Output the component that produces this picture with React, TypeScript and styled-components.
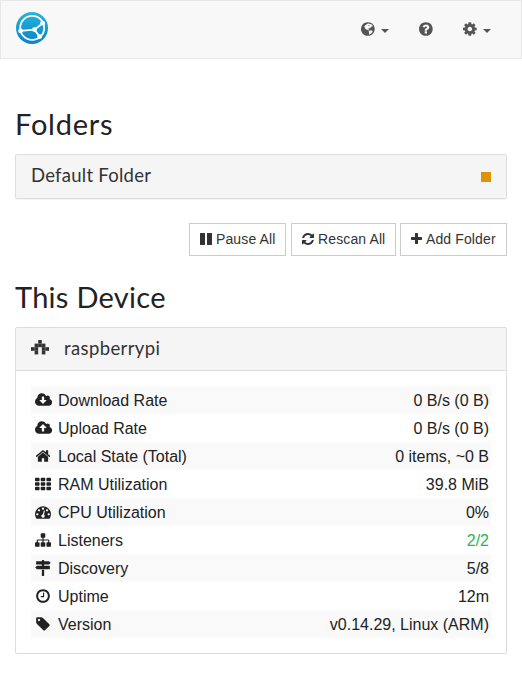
import React from "react";
import styled, { createGlobalStyle } from "styled-components";

const GlobalStyle = createGlobalStyle`
  * { box-sizing: border-box; }
  body {
    margin: 0;
    background: #fff;
    color: #222;
    font: 16px/20px "Liberation Sans", Arial, sans-serif;
  }
`;

const Navbar = styled.nav`
  display: flex;
  align-items: center;
  justify-content: space-between;
  height: 59px;
  padding: 0 30px 0 15px;
  background: #f8f8f8;
  border: 1px solid #e7e7e7;
  color: #555;
`;

const Brand = styled.a`
  display: flex;
  margin-top: -3px;
`;

const NavItems = styled.div`
  display: flex;
  align-items: center;
  gap: 30px;
  margin-top: -1px;
`;

const NavItem = styled.a`
  display: flex;
  align-items: center;
`;

const Caret = styled.span`
  margin: 4px 0 0 6.3px;
  border-top: 4px solid currentColor;
  border-left: 4px solid transparent;
  border-right: 4px solid transparent;
`;

const Main = styled.main`
  padding: 0 15px;
`;

const SectionTitle = styled.h3<{ $top: number; $spacing: number }>`
  margin: ${(p) => p.$top}px 0 14px;
  font: 400 29px/33px Lato, sans-serif;
  letter-spacing: ${(p) => p.$spacing}px;
`;

const Panel = styled.section`
  border: 1px solid #ddd;
  border-radius: 2px;
  box-shadow: 0 1px 1px rgba(0, 0, 0, 0.05);
`;

const PanelHeading = styled.header<{ $height: number; $divided?: boolean }>`
  display: flex;
  align-items: center;
  height: ${(p) => p.$height}px;
  padding: 0 15px;
  background: #f5f5f5;
  color: #333;
  border-bottom: ${(p) => (p.$divided ? "1px solid #ddd" : "0")};
`;

const PanelTitle = styled.h4<{ $spacing: number }>`
  margin: 0;
  padding-bottom: 3px;
  flex: 1;
  font: 400 18.5px/20px Lato, sans-serif;
  letter-spacing: ${(p) => p.$spacing}px;
`;

const StatusSquare = styled.span`
  width: 10px;
  height: 10px;
  margin-top: 1px;
  background: #de9208;
`;

const IdenticonSvg = styled.svg`
  margin: -1px 15px 0 0;
`;

const ButtonRow = styled.div`
  display: flex;
  justify-content: flex-end;
  gap: 4px;
  margin-top: 24px;
`;

const Button = styled.button<{ $width: number }>`
  display: flex;
  align-items: center;
  gap: 4px;
  width: ${(p) => p.$width}px;
  height: 33px;
  padding: 0 0 1px 10px;
  white-space: nowrap;
  background: #fff;
  color: #333;
  border: 1px solid #ccc;
  font: 14px/20px "Liberation Sans", Arial, sans-serif;
  letter-spacing: 0.12px;

  &:first-child {
    margin-right: 1px;
  }
`;

const Table = styled.div`
  padding: 15px;
`;

const Row = styled.div`
  display: flex;
  align-items: center;
  height: 28px;
  padding: 0 2px;
  &:nth-child(odd) {
    background: #f9f9f9;
  }
`;

const IconSlot = styled.span`
  display: flex;
  justify-content: center;
  width: 20.57px;
  margin-right: 4.43px;
`;

const Label = styled.span`
  padding-top: 2px;
`;

const Value = styled.span<{ $ok?: boolean }>`
  margin-left: auto;
  padding-top: 2px;
  color: ${(p) => (p.$ok ? "#29b74e" : "inherit")};
`;

const DISC =
  "M1664 896q0 209-103 385.5t-279.5 279.5-385.5 103-385.5-103-279.5-279.5-103-385.5 103-385.5 279.5-279.5 385.5-103 385.5 103 279.5 279.5 103 385.5z";
const CLOUD =
  "M1920 1152q0 159-112.5 271.5t-271.5 112.5h-1088q-185 0-316.5-131.5t-131.5-316.5q0-130 70-240t188-165q-2-30-2-43 0-212 150-362t362-150q156 0 285.5 87t188.5 231q71-62 166-62 106 0 181 75t75 181q0 76-41 138 130 31 213.5 135.5t83.5 238.5z";
const cell = (x: number, y: number) =>
  `M${x + 96} ${y}h320q40 0 68 28t28 68v192q0 40-28 68t-68 28h-320q-40 0-68-28t-28-68v-192q0-40 28-68t68-28z`;

const ICONS = {
  globe: {
    x: 128,
    w: 1536,
    d:
      DISC +
      "M960 290L1130 330 1230 340 1380 440 1480 600 1400 590 1290 640 1180 760 1090 780 1040 860 960 840 930 920 1010 950 1030 1020 1110 1050 1060 1100 900 1020 740 950 610 870 540 740 500 620 580 490 700 420 800 330z" +
      "M1110 1080L1280 1050 1430 1130 1400 1260 1260 1400 1080 1510 1010 1490 1040 1330 990 1190z" +
      "M960 470L1090 500 1040 580 940 560z",
  },
  question: {
    x: 128,
    w: 1536,
    d:
      DISC +
      "M1024 1376v-192q0-14-9-23t-23-9h-192q-14 0-23 9t-9 23v192q0 14 9 23t23 9h192q14 0 23-9t9-23zM1280 704q0-88-55.5-163t-138.5-116-170-41q-243 0-371 213-15 24 8 42l132 100q7 6 19 6 16 0 25-12 53-68 86-92 34-24 86-24 48 0 85.5 26t37.5 59q0 38-20 61t-68 45q-63 28-115.5 86.5t-52.5 125.5v36q0 14 9 23t23 9h192q14 0 23-9t9-23q0-19 21.5-49.5t54.5-49.5q32-18 49-28.5t46-35 44.5-48 28-60.5 12.5-81z",
  },
  cog: {
    x: 128,
    w: 1536,
    d: "M1152 896q0-106-75-181t-181-75-181 75-75 181 75 181 181 75 181-75 75-181zm512-109v222q0 12-8 23t-20 13l-185 28q-19 54-39 91 35 50 107 138 10 12 10 25t-9 23q-27 37-99 108t-94 71q-12 0-26-9l-138-108q-44 23-91 38-16 136-29 186-7 28-36 28h-222q-14 0-24.5-8.5t-11.5-21.5l-28-184q-49-16-90-37l-141 107q-10 9-25 9-14 0-25-11-126-114-165-168-7-10-7-23 0-12 8-23 15-21 51-66.5t54-70.5q-27-50-41-99l-183-27q-13-2-21-12.5t-8-23.5v-222q0-12 8-23t19-13l186-28q14-46 39-92-40-57-107-138-10-12-10-24 0-10 9-23 26-36 98.5-107.5t94.5-71.5q13 0 26 10l138 107q44-23 91-38 16-136 29-186 7-28 36-28h222q14 0 24.5 8.5t11.5 21.5l28 184q49 16 90 37l142-107q9-9 24-9 13 0 25 10 129 119 165 170 7 8 7 22 0 12-8 23-15 21-51 66.5t-54 70.5q26 50 41 98l183 28q13 2 21 12.5t8 23.5z",
  },
  pause: {
    x: 0,
    w: 1536,
    d: "M1536 192v1408q0 26-19 45t-45 19h-512q-26 0-45-19t-19-45v-1408q0-26 19-45t45-19h512q26 0 45 19t19 45zm-896 0v1408q0 26-19 45t-45 19h-512q-26 0-45-19t-19-45v-1408q0-26 19-45t45-19h512q26 0 45 19t19 45z",
  },
  refresh: {
    x: 0,
    w: 1536,
    d: "M1511 1056q0 5-1 7-64 268-268 434.5t-478 166.5q-146 0-282.5-55t-243.5-157l-129 129q-19 19-45 19t-45-19-19-45v-448q0-26 19-45t45-19h448q26 0 45 19t19 45-19 45l-137 137q71 66 161 102t187 36q134 0 250-65t186-179q11-17 53-117 8-23 30-23h192q13 0 22.5 9.5t9.5 22.5zm25-800v448q0 26-19 45t-45 19h-448q-26 0-45-19t-19-45 19-45l138-138q-148-137-349-137-134 0-250 65t-186 179q-11 17-53 117-8 23-30 23h-199q-13 0-22.5-9.5t-9.5-22.5v-7q65-268 270-434.5t480-166.5q146 0 284 55.5t245 156.5l130-129q19-19 45-19t45 19 19 45z",
  },
  plus: {
    x: 0,
    w: 1408,
    d: "M1408 736v192q0 40-28 68t-68 28h-416v416q0 40-28 68t-68 28h-192q-40 0-68-28t-28-68v-416h-416q-40 0-68-28t-28-68v-192q0-40 28-68t68-28h416v-416q0-40 28-68t68-28h192q40 0 68 28t28 68v416h416q40 0 68 28t28 68z",
  },
  download: {
    x: 0,
    w: 1920,
    d: CLOUD + "M1280 928q0-14-9-23t-23-9h-224v-352q0-13-9.5-22.5t-22.5-9.5h-192q-13 0-22.5 9.5t-9.5 22.5v352h-224q-13 0-22.5 9.5t-9.5 22.5q0 14 9 23l352 352q9 9 23 9t23-9l351-351q10-12 10-24z",
  },
  upload: {
    x: 0,
    w: 1920,
    d: CLOUD + "M1280 864q0-14-9-23l-352-352q-9-9-23-9t-23 9l-351 351q-10 12-10 24 0 14 9 23t23 9h224v352q0 13 9.5 22.5t22.5 9.5h192q13 0 22.5-9.5t9.5-22.5v-352h224q13 0 22.5-9.5t9.5-22.5z",
  },
  home: {
    x: 0,
    w: 1792,
    d: "M1472 992v480q0 26-19 45t-45 19h-384v-384h-256v384h-384q-26 0-45-19t-19-45v-480q0-1 .5-3t.5-3l575-474 575 474q1 2 1 6zm223-69l-62 74q-8 9-21 11h-3q-13 0-21-7l-692-577-692 577q-12 8-24 7-13-2-21-11l-62-74q-8-10-7-23.5t11-21.5l719-599q32-26 76-26t76 26l244 204v-195q0-14 9-23t23-9h192q14 0 23 9t9 23v408l219 182q10 8 11 21.5t-7 23.5z",
  },
  grid: {
    x: 0,
    w: 1792,
    d: [0, 640, 1280].map((x) => [192, 704, 1216].map((y) => cell(x, y)).join("")).join(""),
  },
  gauge: {
    x: 0,
    w: 1792,
    d: "M384 1152q0-53-37.5-90.5t-90.5-37.5-90.5 37.5-37.5 90.5 37.5 90.5 90.5 37.5 90.5-37.5 37.5-90.5zm192-448q0-53-37.5-90.5t-90.5-37.5-90.5 37.5-37.5 90.5 37.5 90.5 90.5 37.5 90.5-37.5 37.5-90.5zm428 481l101-382q6-26-7.5-48.5t-38.5-29.5-48 6.5-30 39.5l-101 382q-60 5-107 43.5t-63 98.5q-20 77 20 146t117 89 146-20 89-117q16-60-6-117t-72-91zm660-33q0-53-37.5-90.5t-90.5-37.5-90.5 37.5-37.5 90.5 37.5 90.5 90.5 37.5 90.5-37.5 37.5-90.5zm-640-640q0-53-37.5-90.5t-90.5-37.5-90.5 37.5-37.5 90.5 37.5 90.5 90.5 37.5 90.5-37.5 37.5-90.5zm448 192q0-53-37.5-90.5t-90.5-37.5-90.5 37.5-37.5 90.5 37.5 90.5 90.5 37.5 90.5-37.5 37.5-90.5zm320 448q0 261-141 483-19 29-54 29h-1402q-35 0-54-29-141-221-141-483 0-182 71-348t191-286 286-191 348-71 348 71 286 191 191 286 71 348z",
  },
  sitemap: {
    x: 0,
    w: 1792,
    d: "M1792 1248v320q0 40-28 68t-68 28h-320q-40 0-68-28t-28-68v-320q0-40 28-68t68-28h96v-192h-512v192h96q40 0 68 28t28 68v320q0 40-28 68t-68 28h-320q-40 0-68-28t-28-68v-320q0-40 28-68t68-28h96v-192h-512v192h96q40 0 68 28t28 68v320q0 40-28 68t-68 28h-320q-40 0-68-28t-28-68v-320q0-40 28-68t68-28h96v-192q0-52 38-90t90-38h512v-192h-96q-40 0-68-28t-28-68v-320q0-40 28-68t68-28h320q40 0 68 28t28 68v320q0 40-28 68t-68 28h-96v192h512q52 0 90 38t38 90v192h96q40 0 68 28t28 68z",
  },
  signs: {
    x: 0,
    w: 1792,
    d: "M1745 297q10 10 10 23t-10 23l-141 141q-28 28-68 28h-1344q-26 0-45-19t-19-45v-256q0-26 19-45t45-19h576v-64q0-26 19-45t45-19h128q26 0 45 19t19 45v64h512q40 0 68 28zM768 1088h256v640q0 26-19 45t-45 19h-128q-26 0-45-19t-19-45zM1600 640q26 0 45 19t19 45v256q0 26-19 45t-45 19h-1344q-40 0-68-28l-141-141q-10-10-10-23t10-23l141-141q28-28 68-28h512v-128h256v128z",
  },
  clock: {
    x: 0,
    w: 1792,
    d: DISC + "M1024 544v448q0 14-9 23t-23 9h-320q-14 0-23-9t-9-23v-64q0-14 9-23t23-9h224v-352q0-14 9-23t23-9h64q14 0 23 9t9 23zM1440 896q0-148-73-273t-198-198-273-73-273 73-198 198-73 273 73 273 198 198 273 73 273-73 198-198 73-273z",
  },
  tag: {
    x: 0,
    w: 1792,
    d: "M576 448q0-53-37.5-90.5t-90.5-37.5-90.5 37.5-37.5 90.5 37.5 90.5 90.5 37.5 90.5-37.5 37.5-90.5zm1067 576q0 53-37 90l-491 492q-39 37-91 37-53 0-90-37l-715-716q-38-37-64.5-101t-26.5-117v-416q0-52 38-90t90-38h416q53 0 117 26.5t102 64.5l715 714q37 39 37 91z",
  },
};

type IconName = keyof typeof ICONS;

const Icon = ({ name, size = 16 }: { name: IconName; size?: number }) => {
  const { x, w, d } = ICONS[name];
  return (
    <svg width={(size * w) / 1792} height={size} viewBox={`${x} 0 ${w} 1792`} fill="currentColor" fillRule="evenodd" aria-hidden>
      <path d={d} />
    </svg>
  );
};

const Logo = () => (
  <svg width="32" height="32" viewBox="0 0 32 32" aria-label="Syncthing">
    <defs>
      <linearGradient id="brand" x1="0" y1="0" x2="0" y2="1">
        <stop offset="0" stopColor="#26b6db" />
        <stop offset="1" stopColor="#0882c8" />
      </linearGradient>
    </defs>
    <circle cx="16" cy="16" r="16" fill="url(#brand)" />
    <g fill="none" stroke="#fff" strokeWidth="1.8">
      <circle cx="16.2" cy="15.9" r="12" />
      <path d="M4.4 18.8L18.4 17.6 26.7 11.2M18.4 17.6L23.7 24.6" />
    </g>
    <g fill="#fff">
      <circle cx="4.6" cy="18.9" r="2.4" />
      <circle cx="18.4" cy="17.6" r="2.4" />
      <circle cx="26.6" cy="11.2" r="2.4" />
      <circle cx="23.7" cy="24.6" r="2.4" />
    </g>
  </svg>
);

const IDENTICON = ["00100", "01110", "11011", "01010"];

const Identicon = () => (
  <IdenticonSvg width="18" height="18" viewBox="0 0 5 5" fill="#333" aria-hidden>
    {IDENTICON.flatMap((line, y) =>
      [...line].map((c, x) => (c === "1" ? <rect key={`${x}-${y}`} x={x} y={y} width="1" height="1" /> : null)),
    )}
  </IdenticonSvg>
);

const STATS: { icon: IconName; label: string; value: string; ok?: boolean }[] = [
  { icon: "download", label: "Download Rate", value: "0 B/s (0 B)" },
  { icon: "upload", label: "Upload Rate", value: "0 B/s (0 B)" },
  { icon: "home", label: "Local State (Total)", value: "0 items, ~0 B" },
  { icon: "grid", label: "RAM Utilization", value: "39.8 MiB" },
  { icon: "gauge", label: "CPU Utilization", value: "0%" },
  { icon: "sitemap", label: "Listeners", value: "2/2", ok: true },
  { icon: "signs", label: "Discovery", value: "5/8" },
  { icon: "clock", label: "Uptime", value: "12m" },
  { icon: "tag", label: "Version", value: "v0.14.29, Linux (ARM)" },
];

export default function App() {
  return (
    <>
      <GlobalStyle />
      <Navbar>
        <Brand><Logo /></Brand>
        <NavItems>
          <NavItem><Icon name="globe" /><Caret /></NavItem>
          <NavItem><Icon name="question" /></NavItem>
          <NavItem><Icon name="cog" /><Caret /></NavItem>
        </NavItems>
      </Navbar>
      <Main>
        <SectionTitle $top={48} $spacing={0.75}>Folders</SectionTitle>
        <Panel>
          <PanelHeading $height={43}>
            <PanelTitle $spacing={0.25}>Default Folder</PanelTitle>
            <StatusSquare />
          </PanelHeading>
        </Panel>
        <ButtonRow>
          <Button $width={97}><Icon name="pause" size={14} />Pause All</Button>
          <Button $width={105}><Icon name="refresh" size={14} />Rescan All</Button>
          <Button $width={107}><Icon name="plus" size={14} />Add Folder</Button>
        </ButtonRow>
        <SectionTitle $top={24} $spacing={0.28}>This Device</SectionTitle>
        <Panel>
          <PanelHeading $height={43} $divided>
            <Identicon />
            <PanelTitle $spacing={0.38}>raspberrypi</PanelTitle>
          </PanelHeading>
          <Table>
            {STATS.map((s) => (
              <Row key={s.label}>
                <IconSlot><Icon name={s.icon} /></IconSlot>
                <Label>{s.label}</Label>
                <Value $ok={s.ok}>{s.value}</Value>
              </Row>
            ))}
          </Table>
        </Panel>
      </Main>
    </>
  );
}
